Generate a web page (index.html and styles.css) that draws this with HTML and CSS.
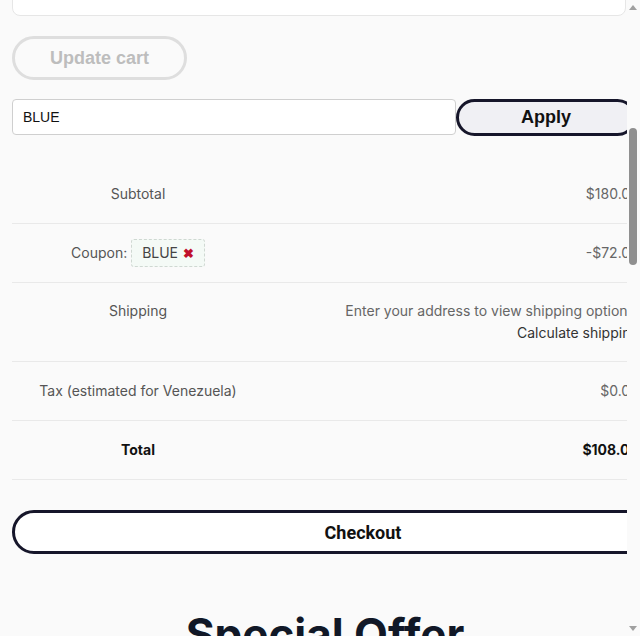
FILE: index.html
```html
<!DOCTYPE html>
<html lang="en">
<head>
    <meta charset="UTF-8">
    <meta name="viewport" content="width=device-width, initial-scale=1.0">
    <title>Cart</title>
    <link rel="stylesheet" href="styles.css">
</head>
<body>
    <div class="frame">
        <div class="cart">
            <div class="cart-items"></div>

            <button class="update-cart" disabled>Update cart</button>

            <form class="coupon-form">
                <input class="coupon-input" type="text" value="BLUE">
                <button class="apply" type="button">Apply</button>
            </form>

            <table class="totals">
                <tr>
                    <th>Subtotal</th>
                    <td>$180.00</td>
                </tr>
                <tr>
                    <th>Coupon: <span class="chip">BLUE <span class="remove">&#x2716;</span></span></th>
                    <td>-$72.00</td>
                </tr>
                <tr class="shipping">
                    <th>Shipping</th>
                    <td>
                        Enter your address to view shipping options.<br>
                        <a class="calc">Calculate shipping</a>
                    </td>
                </tr>
                <tr>
                    <th>Tax (estimated for Venezuela)</th>
                    <td class="muted">$0.00</td>
                </tr>
                <tr class="total">
                    <th>Total</th>
                    <td>$108.00</td>
                </tr>
            </table>

            <button class="checkout">Checkout</button>

            <h2 class="offer-title">Special Offer</h2>
        </div>
    </div>

    <div class="scrollbar">
        <div class="arrow up"></div>
        <div class="thumb"></div>
        <div class="arrow down"></div>
    </div>
</body>
</html>
```

FILE: styles.css
```css
body {
    margin: 0;
    padding: 0;
    background: #fafafa;
    font-family: Inter, "Liberation Sans", sans-serif;
    color: #555;
    overflow: hidden;
}

.frame {
    width: 627px;
    height: 636px;
    overflow: hidden;
}

.cart {
    width: 740px;
    padding-left: 12px;
}

.cart-items {
    width: 614px;
    height: 60px;
    margin-top: -44px;
    box-sizing: border-box;
    background: #fff;
    border: 1px solid #e6e6e6;
    border-radius: 8px;
}

.update-cart {
    display: block;
    width: 175px;
    height: 44px;
    margin-top: 20px;
    background: transparent;
    border: 3px solid #dedede;
    border-radius: 22px;
    font-family: "Liberation Sans", Arial, sans-serif;
    font-size: 18px;
    font-weight: bold;
    color: #bdbdbd;
}

.coupon-form {
    display: flex;
    margin-top: 19px;
}

.coupon-input {
    width: 444px;
    height: 36px;
    box-sizing: border-box;
    padding: 0 10px;
    border: 1px solid #cfcfcf;
    border-radius: 4px;
    background: #fff;
    font-family: "Liberation Sans", Arial, sans-serif;
    font-size: 14px;
    color: #111;
}

.apply {
    width: 180px;
    height: 37px;
    box-sizing: border-box;
    padding-bottom: 2px;
    border: 3px solid #16162a;
    border-radius: 19px;
    background: #f0f0f4;
    font-family: "Liberation Sans", Arial, sans-serif;
    font-size: 18px;
    font-weight: bold;
    color: #111;
}

.totals {
    width: 627px;
    margin-top: 29px;
    border-collapse: collapse;
    font-size: 14px;
}

.totals tr {
    border-bottom: 1px solid #e9e9e9;
}

.totals th,
.totals td {
    padding: 18px 0;
    line-height: 22px;
    vertical-align: top;
}

.totals th {
    width: 252px;
    font-weight: normal;
    text-align: center;
    color: #555;
}

.totals td {
    text-align: right;
    color: #666;
}

.totals .shipping th,
.totals .shipping td {
    padding: 17px 0;
}

.chip {
    display: inline-block;
    margin: -4px 0 -4px 0;
    padding: 2px 10px;
    line-height: 21px;
    background: #f4faf6;
    border: 1px dashed #cfd8d2;
    border-radius: 3px;
    color: #444;
}

.remove {
    color: #c0102c;
    font-size: 13px;
    font-weight: bold;
    margin-left: 1px;
}

.calc {
    color: #333;
}

.muted {
    color: #888;
}

.totals .total th,
.totals .total td {
    font-weight: bold;
    color: #111;
}

.checkout {
    display: block;
    width: 702px;
    height: 44px;
    margin-top: 30px;
    background: #fff;
    border: 3px solid #16162a;
    border-radius: 22px;
    font-family: Roboto, "Liberation Sans", sans-serif;
    font-size: 18px;
    font-weight: bold;
    color: #111;
}

.offer-title {
    width: 626px;
    margin: 54px 0 0;
    font-size: 44px;
    line-height: 52px;
    text-align: center;
    color: #111827;
}

.scrollbar {
    position: fixed;
    top: 0;
    right: 0;
    width: 13px;
    height: 636px;
    background: #fafafa;
}

.thumb {
    position: absolute;
    top: 128px;
    left: 2px;
    width: 8px;
    height: 137px;
    border-radius: 4px;
    background: #8f8f8f;
}

.arrow {
    position: absolute;
    left: 2px;
    width: 0;
    height: 0;
    border-left: 4px solid transparent;
    border-right: 4px solid transparent;
}

.arrow.up {
    top: 5px;
    border-bottom: 5px solid #a0a0a0;
}

.arrow.down {
    bottom: 5px;
    border-top: 5px solid #a0a0a0;
}
```
